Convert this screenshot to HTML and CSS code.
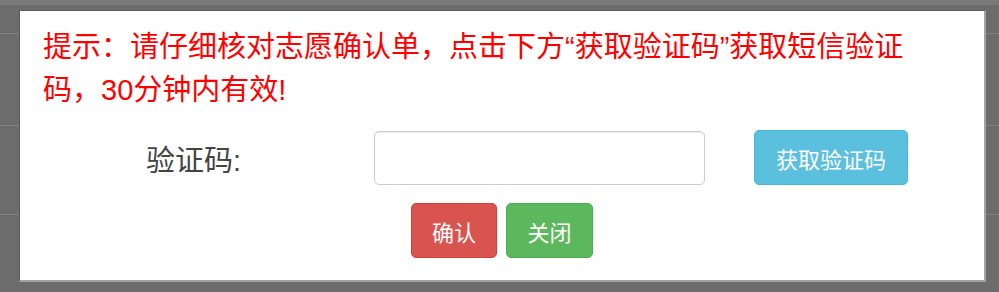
FILE: index.html
```html
<!DOCTYPE html>
<html lang="zh-CN">
<head>
<meta charset="utf-8">
<title>验证码</title>
<link rel="stylesheet" href="styles.css">
</head>
<body>
<div class="dialog">
  <p class="tip">提示：请仔细核对志愿确认单，点击下方“获取验证码”获取短信验证码，30分钟内有效!</p>
  <div class="form-row">
    <label class="label" for="code">验证码:</label>
    <input class="input" id="code" type="text">
    <button class="btn btn-info" type="button">获取验证码</button>
  </div>
  <div class="actions">
    <button class="btn btn-danger" type="button">确认</button>
    <button class="btn btn-success" type="button">关闭</button>
  </div>
</div>
</body>
</html>
```

FILE: styles.css
```css
html, body {
  margin: 0;
  padding: 0;
}
body {
  width: 999px;
  height: 292px;
  overflow: hidden;
  font-family: "Liberation Sans", "Noto Sans CJK SC", sans-serif;
  background-color: #6c6c6c;
  background-image:
    linear-gradient(#7a7a7a, #7a7a7a),
    linear-gradient(#828282, #828282),
    linear-gradient(#828282, #828282),
    linear-gradient(#828282, #828282);
  background-size: 100% 5px, 100% 1px, 100% 1px, 100% 1px;
  background-position: 0 0, 0 33px, 0 125px, 0 214px;
  background-repeat: no-repeat;
}
.dialog {
  box-sizing: border-box;
  width: 967px;
  margin: 10px 0 0 19px;
  padding: 15px 70px 22px 23px;
  background: #fff;
  border: 1px solid #5a5a5a;
  border-width: 1px 2px 2px 1px;
  border-right-color: #a3a3a3;
  border-bottom-color: #a3a3a3;
}
.tip {
  margin: 0 0 18px;
  color: #ff0000;
  font-size: 29px;
  line-height: 43px;
}
.form-row {
  display: flex;
  align-items: center;
  height: 55px;
}
.label {
  width: 198px;
  text-align: right;
  color: #444;
  font-size: 29px;
}
.input {
  box-sizing: border-box;
  width: 331px;
  height: 54px;
  margin: 0 0 0 133px;
  border: 1px solid #ccc;
  border-radius: 5px;
  background: #fff;
  box-shadow: inset 0 1px 1px rgba(0,0,0,.075);
  outline: none;
}
.btn {
  box-sizing: border-box;
  height: 55px;
  padding: 0;
  border: 1px solid transparent;
  border-radius: 5px;
  color: #fff;
  font-family: "Liberation Sans", "Noto Sans CJK SC", sans-serif;
  font-size: 22px;
  cursor: pointer;
}
.btn-info {
  width: 154px;
  margin-left: 49px;
  background: #5bc0de;
  border-color: #46b8da;
}
.actions {
  display: flex;
  justify-content: center;
  gap: 9px;
  margin: 18px 0 0 47px;
}
.btn-danger {
  width: 86px;
  background: #d9534f;
  border-color: #d43f3a;
}
.btn-success {
  width: 87px;
  background: #5cb85c;
  border-color: #4cae4c;
}
```
